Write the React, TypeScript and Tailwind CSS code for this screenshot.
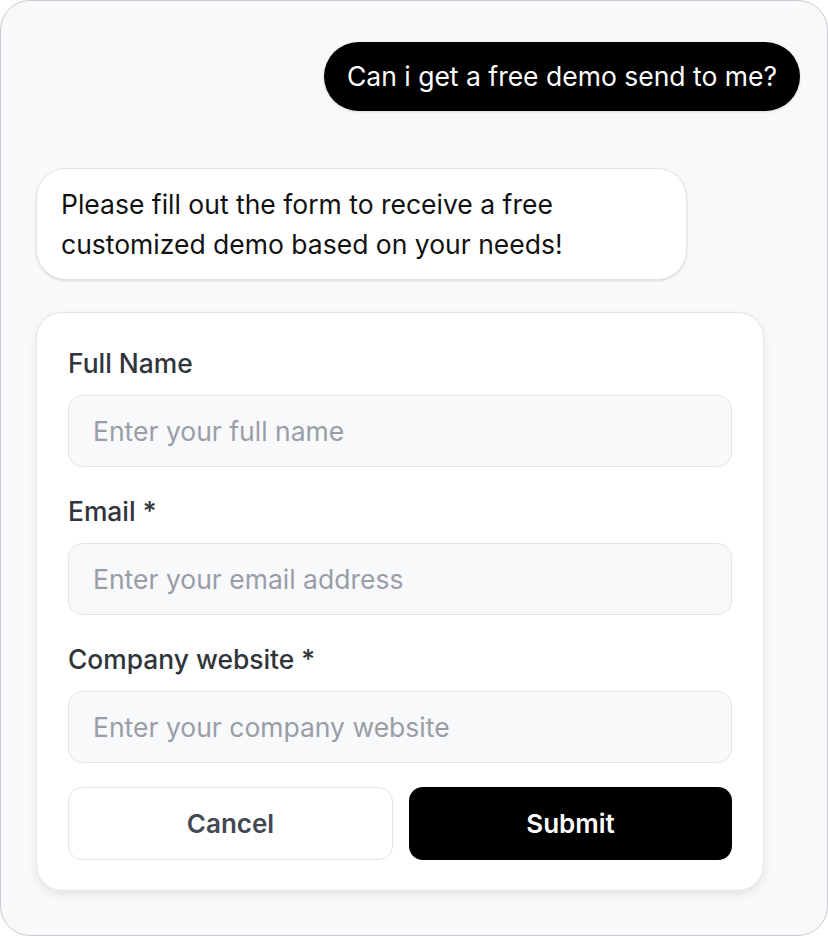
const FIELDS = [
  { label: "Full Name", placeholder: "Enter your full name", type: "text" },
  { label: "Email *", placeholder: "Enter your email address", type: "email" },
  { label: "Company website *", placeholder: "Enter your company website", type: "url" },
];

export default function App() {
  return (
    <div
      className="w-[828px] h-[936px] rounded-[30px] border border-[#c9cacf] bg-[#f8f9fb] flex flex-col pt-[41px] pl-[35px] pr-[27px] overflow-hidden"
      style={{ fontFamily: "Inter, 'Liberation Sans', sans-serif" }}
    >
      {/* User message */}
      <div className="flex justify-end">
        <div className="bg-black text-white rounded-full px-[23px] py-[19px] text-[26.5px] leading-[31px] shadow-sm">
          Can i get a free demo send to me?
        </div>
      </div>

      {/* Assistant message */}
      <div className="mt-[57px] w-[651px] bg-white border border-[#e4e5e9] rounded-[30px] px-[24px] py-[15px] text-[26.5px] leading-[40px] text-[#111111] shadow-sm">
        Please fill out the form to receive a free customized demo based on your needs!
      </div>

      {/* Form card */}
      <div className="mt-[32px] w-[728px] bg-white border border-[#e4e5e9] rounded-[26px] px-[31px] pt-[34px] pb-[30px] shadow-[0_4px_10px_rgba(0,0,0,0.08)]">
        <div className="flex flex-col gap-[28px]">
          {FIELDS.map(f => (
            <div key={f.label} className="flex flex-col gap-[16px]">
              <label className="text-[26.4px] leading-[32px] font-medium text-[#30343b]">{f.label}</label>
              <input
                type={f.type}
                placeholder={f.placeholder}
                className="h-[72px] w-full rounded-[14px] border border-[#e4e5e9] bg-[#f8f9fb] px-[24px] text-[26.5px] text-[#111111] placeholder:text-[#9a9da6] outline-none"
              />
            </div>
          ))}
        </div>

        <div className="mt-[24px] flex gap-[16px]">
          <button className="flex-1 h-[73px] rounded-[14px] border border-[#e4e5e9] bg-white text-[26px] font-semibold text-[#444852]">
            Cancel
          </button>
          <button className="flex-1 h-[73px] rounded-[14px] bg-black text-[26px] font-semibold text-white">
            Submit
          </button>
        </div>
      </div>
    </div>
  );
}
